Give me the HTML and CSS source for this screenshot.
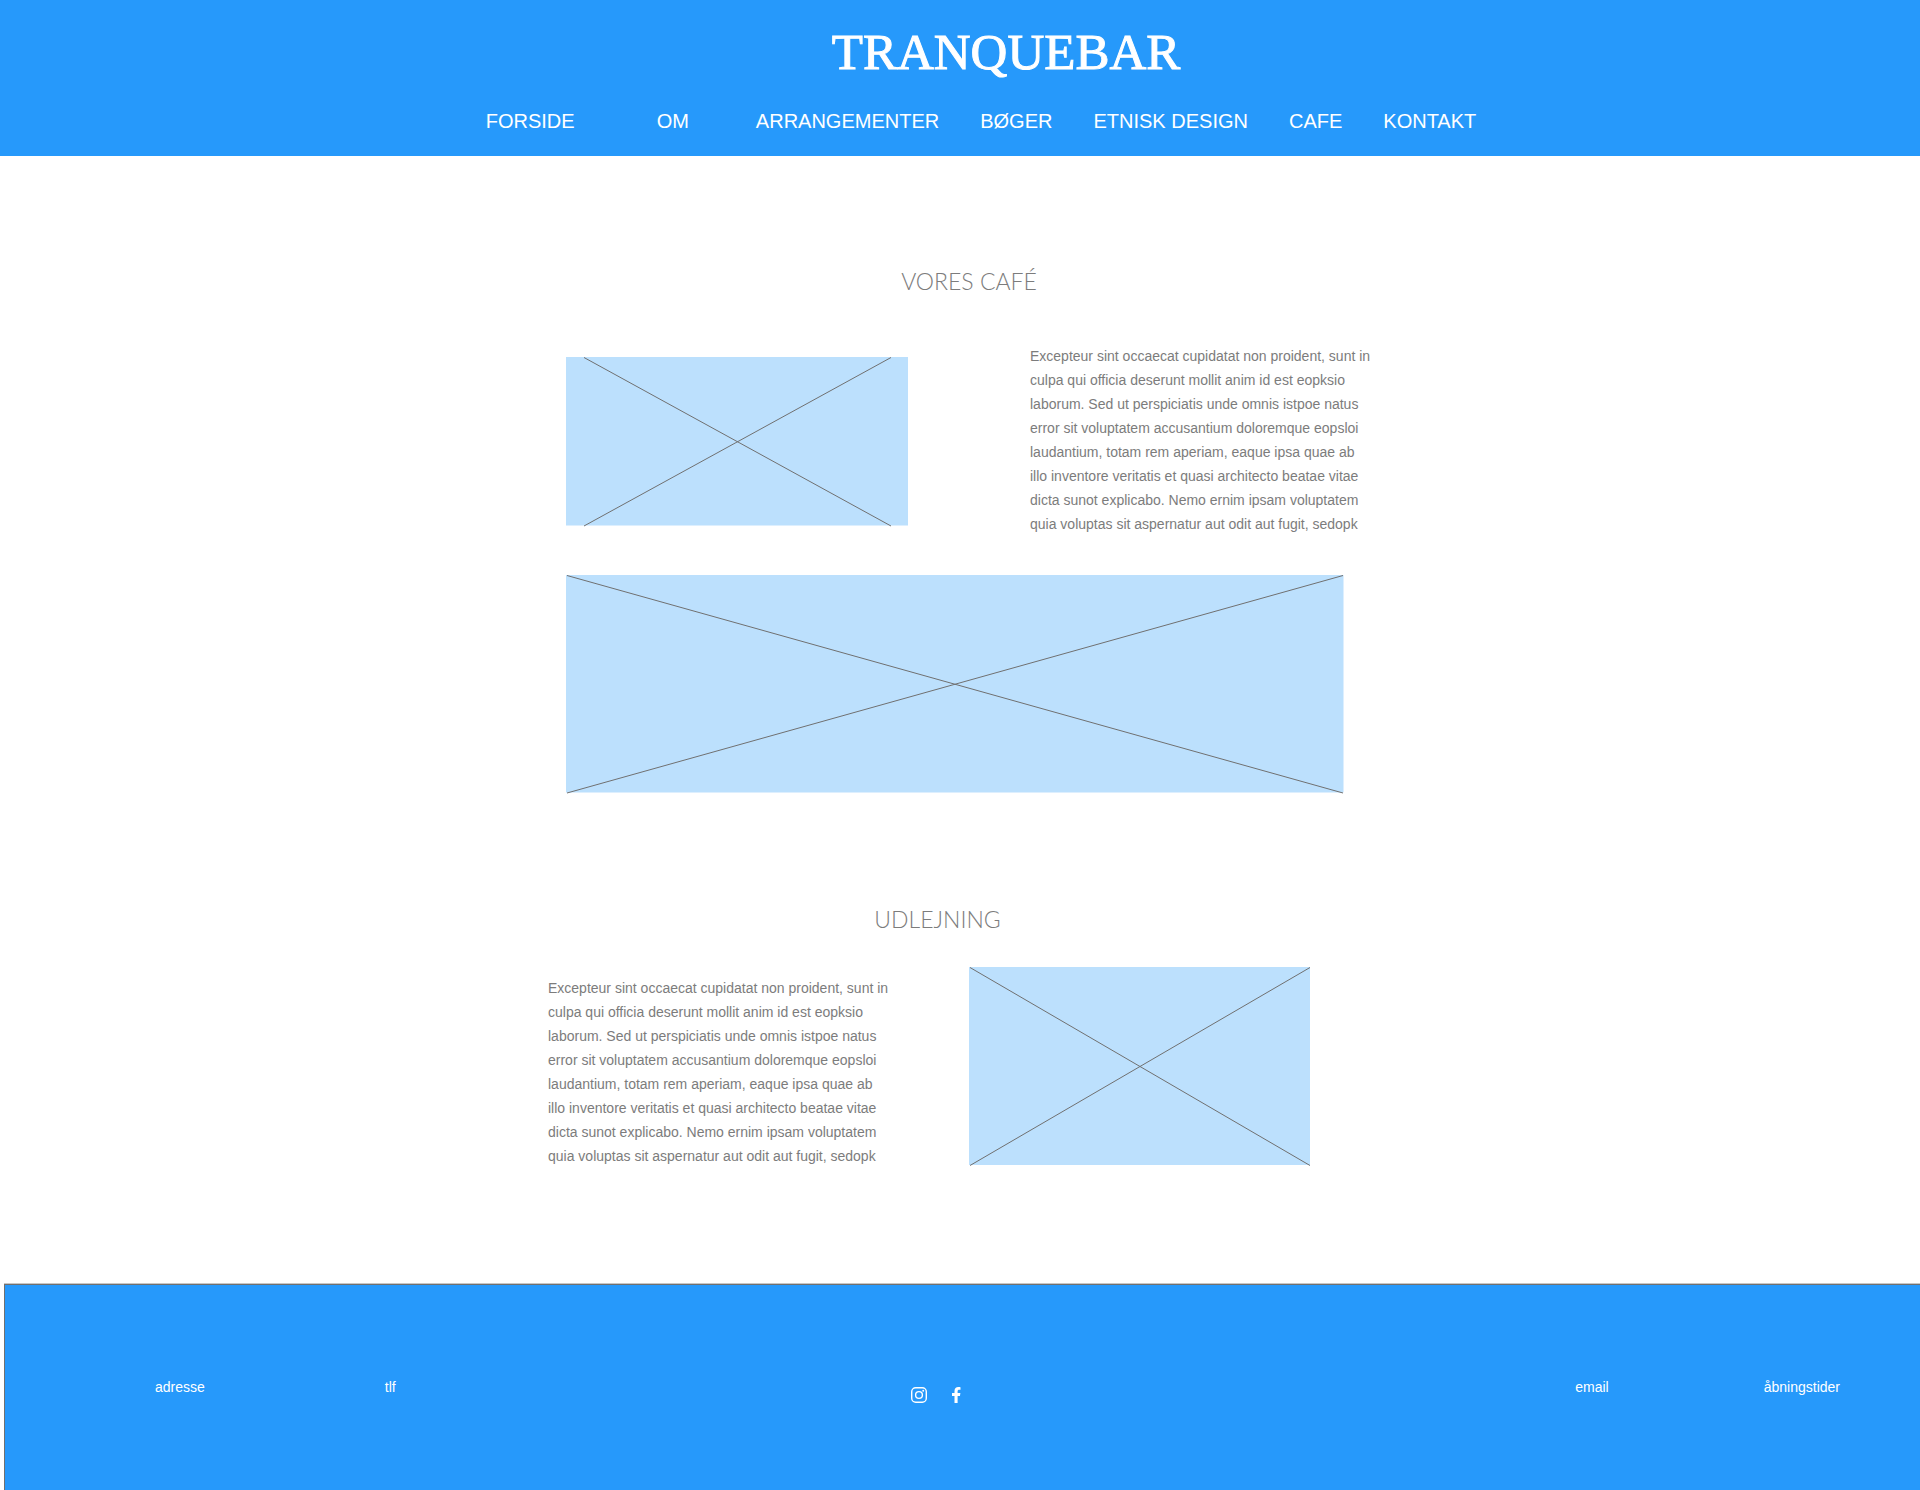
FILE: index.html
```html
<!DOCTYPE html>
<html lang="da">
<head>
<meta charset="utf-8">
<meta name="viewport" content="width=device-width, initial-scale=1">
<title>Tranquebar</title>
<link rel="stylesheet" href="styles.css">
</head>
<body>
<header class="header">
  <h1 class="brand">TRANQUEBAR</h1>
  <nav>
    <ul class="menu">
      <li><a href="#">FORSIDE</a></li>
      <li class="menu-wide"><a href="#">OM</a></li>
      <li><a href="#">ARRANGEMENTER</a></li>
      <li><a href="#">BØGER</a></li>
      <li><a href="#">ETNISK DESIGN</a></li>
      <li><a href="#">CAFE</a></li>
      <li><a href="#">KONTAKT</a></li>
    </ul>
  </nav>
</header>

<main class="main">
  <section class="cafe">
    <h2 class="heading">VORES CAFÉ</h2>
    <div class="cafe-row">
      <svg class="photo photo-small" viewBox="0 0 342 169" aria-hidden="true">
        <rect width="342" height="168.500"/>
        <path d="M18 .5 325 169M325 .5 18 169"/>
      </svg>
      <p class="copy">Excepteur sint occaecat cupidatat non proident, sunt in culpa qui officia deserunt mollit anim id est eopksio laborum. Sed ut perspiciatis unde omnis istpoe natus error sit voluptatem accusantium doloremque eopsloi laudantium, totam rem aperiam, eaque ipsa quae ab illo inventore veritatis et quasi architecto beatae vitae dicta sunot explicabo. Nemo ernim ipsam voluptatem quia voluptas sit aspernatur aut odit aut fugit, sedopk</p>
    </div>
    <svg class="photo photo-wide" viewBox="0 0 778 218" aria-hidden="true">
      <rect width="777.500" height="217.500"/>
      <path d="M1 .5 777 218M777 .5 1 218"/>
    </svg>
  </section>

  <section class="rental">
    <h2 class="heading">UDLEJNING</h2>
    <div class="rental-row">
      <p class="copy">Excepteur sint occaecat cupidatat non proident, sunt in culpa qui officia deserunt mollit anim id est eopksio laborum. Sed ut perspiciatis unde omnis istpoe natus error sit voluptatem accusantium doloremque eopsloi laudantium, totam rem aperiam, eaque ipsa quae ab illo inventore veritatis et quasi architecto beatae vitae dicta sunot explicabo. Nemo ernim ipsam voluptatem quia voluptas sit aspernatur aut odit aut fugit, sedopk</p>
      <svg class="photo photo-medium" viewBox="0 0 341 198" aria-hidden="true">
        <rect width="341" height="198"/>
        <path d="M1 .5 341 198.500M341 .5 1 198.500"/>
      </svg>
    </div>
  </section>
</main>

<footer class="footer">
  <div class="contact contact-start">
    <span>adresse</span>
    <span>tlf</span>
  </div>
  <div class="social">
    <a href="#" aria-label="Instagram">
      <svg class="icon" viewBox="0 0 16 16" width="16" height="16" fill="none" stroke="currentColor" stroke-width="1.400">
        <rect x=".7" y=".7" width="14.600" height="14.600" rx="4"/>
        <circle cx="8" cy="8" r="3.400"/>
        <circle cx="12.200" cy="3.800" r=".95" fill="currentColor" stroke="none"/>
      </svg>
    </a>
    <a href="#" aria-label="Facebook">
      <svg class="icon" viewBox="0 0 9 16" width="9" height="16" fill="currentColor">
        <path d="M2.500 16V8.900H0V6h2.500V3.900C2.500 1.400 4 0 6.300 0 7.400 0 8.500.2 8.500.2v2.500H7.200C6 2.700 5.600 3.400 5.600 4.200V6h2.800l-.45 2.900H5.600V16z"/>
      </svg>
    </a>
  </div>
  <div class="contact contact-end">
    <span>email</span>
    <span>åbningstider</span>
  </div>
</footer>
</body>
</html>
```
FILE: styles.css
```css
* {
  box-sizing: border-box;
}

body {
  margin: 0;
  min-height: 100vh;
  display: flex;
  flex-direction: column;
  background: #fff;
  color: #7c7c7c;
  font-family: "Liberation Sans", Arial, sans-serif;
  font-size: 14px;
  line-height: 24px;
}

h1,
h2,
p,
ul {
  margin: 0;
  padding: 0;
}

a {
  color: inherit;
  text-decoration: none;
}

/* Header */

.header {
  padding: 22px 0 23px;
  background: #2699fb;
  color: #fff;
}

.brand {
  padding-left: 92px;
  font-family: "Liberation Serif", "Times New Roman", serif;
  font-size: 51px;
  font-weight: 400;
  line-height: 60px;
  text-align: center;
  -webkit-text-stroke: 1px #fff;
}

.menu {
  display: flex;
  flex-wrap: wrap;
  justify-content: center;
  column-gap: 41px;
  margin-top: 27px;
  padding-left: 42px;
  font-size: 20px;
  list-style: none;
}

.menu-wide {
  padding: 0 26px 0 41px;
}

/* Content */

.main {
  width: 100%;
  max-width: 824px;
  margin: 0 auto;
  padding: 111px 0 116px;
}

.heading {
  font-family: Lato, sans-serif;
  font-size: 23px;
  font-weight: 300;
  line-height: 28px;
  text-align: center;
}

.copy {
  flex: 0 1 342px;
}

.photo {
  display: block;
  flex: none;
  overflow: visible;
}

.photo rect {
  fill: #bce0fd;
}

.photo path {
  fill: none;
  stroke: #707070;
}

.cafe {
  padding-left: 18px;
}

.cafe-row {
  display: flex;
  align-items: flex-start;
  justify-content: space-between;
  margin: 49px 0 39px;
}

.photo-small {
  width: 342px;
  margin-top: 13px;
}

.photo-wide {
  width: 100%;
  max-width: 778px;
}

.rental {
  margin-top: 112px;
}

.rental .heading {
  padding-right: 45px;
}

.rental-row {
  display: flex;
  align-items: flex-start;
  gap: 79px;
  margin-top: 34px;
}

.rental-row .copy {
  margin-top: 9px;
}

.photo-medium {
  width: 341px;
}

/* Footer */

.footer {
  flex: 1;
  display: grid;
  grid-template-columns: 1fr auto 1fr;
  align-items: start;
  min-height: 206px;
  margin-left: 4px;
  padding: 90px 0;
  border: solid #707070;
  border-width: 1px 0 0 1px;
  box-shadow: 0 -1px 0 #c6c6c6;
  background: #2699fb;
  color: #fff;
}

.contact {
  display: flex;
}

.contact-start {
  gap: 180px;
  padding-left: 150px;
}

.contact-end {
  gap: 155px;
  justify-content: flex-end;
  padding-right: 80px;
}

.social {
  display: flex;
  gap: 25px;
  padding: 12px 54px 0 0;
}

.icon {
  display: block;
}
```
